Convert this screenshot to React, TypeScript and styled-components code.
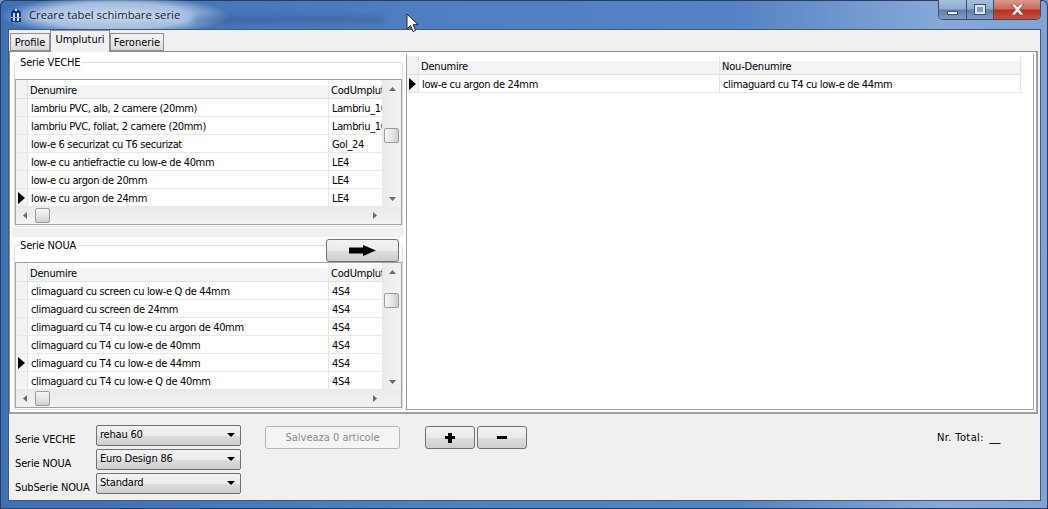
import React from "react";
import styled, { createGlobalStyle } from "styled-components";

const GlobalStyle = createGlobalStyle`
  html, body {
    margin: 0;
    padding: 0;
    background: #6f97cb;
  }
  * {
    box-sizing: border-box;
  }
`;

const uiFont = `"DejaVu Sans", "Noto Sans", sans-serif`;

const oldRows = [
  ["lambriu PVC, alb, 2 camere (20mm)", "Lambriu_10"],
  ["lambriu PVC, foliat, 2 camere (20mm)", "Lambriu_10"],
  ["low-e 6 securizat cu T6 securizat", "Gol_24"],
  ["low-e cu antiefractie cu low-e de 40mm", "LE4"],
  ["low-e cu argon de 20mm", "LE4"],
  ["low-e cu argon de 24mm", "LE4"],
];

const newRows = [
  ["climaguard cu screen cu low-e Q de 44mm", "4S4"],
  ["climaguard cu screen de 24mm", "4S4"],
  ["climaguard cu T4 cu low-e cu argon de 40mm", "4S4"],
  ["climaguard cu T4 cu low-e de 40mm", "4S4"],
  ["climaguard cu T4 cu low-e de 44mm", "4S4"],
  ["climaguard cu T4 cu low-e Q de 40mm", "4S4"],
];

const RowArrow = () => (
  <svg width="7" height="12" viewBox="0 0 7 12">
    <path d="M0 0 L7 6 L0 12 Z" fill="#000" />
  </svg>
);

const SmallArrow = ({ dir }: { dir: "up" | "down" | "left" | "right" }) => {
  const paths = {
    up: "M0 4 L3.5 0 L7 4 Z",
    down: "M0 0 L7 0 L3.5 4 Z",
    left: "M5 0 L5 7 L1 3.5 Z",
    right: "M1 0 L1 7 L5 3.5 Z",
  };
  const vertical = dir === "up" || dir === "down";
  return (
    <svg width={vertical ? 7 : 6} height={vertical ? 4 : 7} viewBox={vertical ? "0 0 7 4" : "0 0 6 7"}>
      <path d={paths[dir]} fill="#6a6a6a" />
    </svg>
  );
};

const DataGrid = ({
  rows,
  selected,
  thumbTop,
}: {
  rows: string[][];
  selected: number;
  thumbTop: number;
}) => (
  <GridFrame>
    <GridMain>
      <GridBody>
        <HeaderRow>
          <IndicatorHead />
          <HeadCell $width={301}>Denumire</HeadCell>
          <HeadCell $width={54}>CodUmplut</HeadCell>
        </HeaderRow>
        {rows.map((r, i) => (
          <DataRow key={r[0]}>
            <Indicator>{i === selected && <RowArrow />}</Indicator>
            <Cell $width={301}>{r[0]}</Cell>
            <Cell $width={54}>{r[1]}</Cell>
          </DataRow>
        ))}
      </GridBody>
      <VScroll>
        <ArrowBox>
          <SmallArrow dir="up" />
        </ArrowBox>
        <VThumb style={{ top: thumbTop }} />
        <ArrowBox>
          <SmallArrow dir="down" />
        </ArrowBox>
      </VScroll>
    </GridMain>
    <HScroll>
      <HArrowBox>
        <SmallArrow dir="left" />
      </HArrowBox>
      <HThumb />
      <HTrack />
      <HArrowBox>
        <SmallArrow dir="right" />
      </HArrowBox>
    </HScroll>
  </GridFrame>
);

const App = () => (
  <>
    <GlobalStyle />
    <Win>
      <TitleBar>
        <TitleGlow />
        <TitleSmear />
        <AppIcon>
          <svg width="10" height="14" viewBox="0 0 10 14">
            <path d="M0 14 V4 Q5 -2 10 4 V14 Z" fill="#10309c" />
            <rect x="4" y="1" width="2" height="2" fill="#dfe9ff" />
            <rect x="2" y="5" width="2" height="8" fill="#cfe0ff" />
            <rect x="6" y="5" width="2" height="8" fill="#eef4ff" />
            <rect x="0" y="9" width="10" height="1" fill="#8fb0f0" />
          </svg>
        </AppIcon>
        <TitleText>Creare tabel schimbare serie</TitleText>
        <WinButtons>
          <MinButton>
            <MinGlyph />
          </MinButton>
          <MaxButton>
            <MaxGlyph />
          </MaxButton>
          <CloseButton>
            <svg width="15" height="11" viewBox="0 0 15 11">
              <path
                d="M1 0 H5 L7.5 3 L10 0 H14 L9.5 5.5 L14 11 H10 L7.5 8 L5 11 H1 L5.5 5.5 Z"
                fill="#eeeeee"
                stroke="#5e2a22"
                strokeWidth="0.6"
              />
            </svg>
          </CloseButton>
        </WinButtons>
      </TitleBar>

      <Client>
        <TabStrip>
          <Tab $width={40}>Profile</Tab>
          <Tab $width={60} $active>
            Umpluturi
          </Tab>
          <Tab $width={54}>Feronerie</Tab>
        </TabStrip>
        <TabPage>
          <LeftColumn>
            <LeftPanel>
              <Group>
                <GroupLegend>Serie VECHE</GroupLegend>
                <DataGrid rows={oldRows} selected={5} thumbTop={48} />
              </Group>
            </LeftPanel>
            <Splitter />
            <LeftPanel>
              <Group>
                <GroupLegend>Serie NOUA</GroupLegend>
                <ArrowButton>
                  <svg width="27" height="11" viewBox="0 0 27 11">
                    <path d="M0 2.5 H14 V0 L27 5.5 L14 11 V8.5 H0 Z" fill="#000" />
                  </svg>
                </ArrowButton>
                <DataGrid rows={newRows} selected={4} thumbTop={30} />
              </Group>
            </LeftPanel>
          </LeftColumn>
          <RightPanel>
            <RightHeader>
              <IndicatorHead />
              <HeadCell $width={301}>Denumire</HeadCell>
              <HeadCell $width={301}>Nou-Denumire</HeadCell>
            </RightHeader>
            <RightRow>
              <Indicator>
                <RowArrow />
              </Indicator>
              <Cell $width={301}>low-e cu argon de 24mm</Cell>
              <Cell $width={301}>climaguard cu T4 cu low-e de 44mm</Cell>
            </RightRow>
          </RightPanel>
        </TabPage>

        <BottomBar>
          <FormColumn>
            <FormRow>
              <FormLabel>Serie VECHE</FormLabel>
              <Combo>
                rehau 60
                <ComboCaret />
              </Combo>
            </FormRow>
            <FormRow>
              <FormLabel>Serie NOUA</FormLabel>
              <Combo>
                Euro Design 86
                <ComboCaret />
              </Combo>
            </FormRow>
            <FormRow>
              <FormLabel>SubSerie NOUA</FormLabel>
              <Combo>
                Standard
                <ComboCaret />
              </Combo>
            </FormRow>
          </FormColumn>
          <SaveButton>Salveaza 0 articole</SaveButton>
          <PlusMinus>
            <SquareButton>
              <PlusGlyph />
            </SquareButton>
            <SquareButton>
              <MinusGlyph />
            </SquareButton>
          </PlusMinus>
          <TotalLabel>
            Nr. Total: <TotalValue>__</TotalValue>
          </TotalLabel>
        </BottomBar>
      </Client>

      <Cursor>
        <svg width="13" height="20" viewBox="0 0 13 20">
          <path
            d="M1 1 V16 L4.5 12.5 L7 18.5 L9.5 17.5 L7 11.7 H12 Z"
            fill="#fff"
            stroke="#222"
            strokeWidth="1"
          />
        </svg>
      </Cursor>
    </Win>
  </>
);

export default App;

const Win = styled.div`
  position: relative;
  width: 1048px;
  height: 509px;
  overflow: hidden;
  padding: 0 7px 8px 8px;
  display: flex;
  flex-direction: column;
  font-family: ${uiFont};
  font-stretch: condensed;
  font-size: 11px;
  color: #000;
  box-shadow: inset 0 0 0 1px #2c3e57;
  border-radius: 6px 6px 0 0;
  background: linear-gradient(
    90deg,
    #3f6fb4 0%,
    #4f7fc0 40%,
    #5582c4 70%,
    #86a9d9 90%,
    #7fa3d4 100%
  );
`;

const TitleBar = styled.div`
  position: relative;
  height: 29px;
  flex: none;
  display: flex;
  align-items: center;
  padding-left: 1px;
`;

const TitleGlow = styled.div`
  position: absolute;
  left: -8px;
  top: -4px;
  width: 230px;
  height: 40px;
  background: radial-gradient(
    closest-side,
    rgba(200, 216, 236, 0.95) 0%,
    rgba(180, 203, 232, 0.85) 65%,
    rgba(150, 185, 225, 0) 100%
  );
`;

const TitleSmear = styled.div`
  position: absolute;
  left: 185px;
  top: 16px;
  width: 190px;
  height: 7px;
  background: rgba(40, 70, 120, 0.35);
  filter: blur(3px);
`;

const AppIcon = styled.div`
  position: relative;
  width: 20px;
  height: 16px;
  padding-left: 2px;
  display: flex;
  align-items: center;
`;

const TitleText = styled.div`
  position: relative;
  font-family: "Open Sans", sans-serif;
  font-stretch: normal;
  font-size: 11.3px;
  color: #1a222e;
  text-shadow: 0 0 6px #fff;
`;

const WinButtons = styled.div`
  position: absolute;
  top: 0;
  right: 0;
  width: 103px;
  height: 20px;
  display: flex;
  border: 1px solid #3c4d66;
  border-top: none;
  border-radius: 0 0 5px 5px;
  overflow: hidden;
`;

const WinButton = styled.div`
  height: 100%;
  display: flex;
  align-items: center;
  justify-content: center;
  border-right: 1px solid #3c4d66;
  background: linear-gradient(180deg, #a9bfdc 0%, #8ea9cd 48%, #5d7ea8 52%, #7f9cc2 100%);
`;

const MinButton = styled(WinButton)`
  width: 28px;
  align-items: flex-end;
  padding-bottom: 4px;
`;

const MaxButton = styled(WinButton)`
  width: 27px;
`;

const CloseButton = styled(WinButton)`
  flex: 1;
  border-right: none;
  background: linear-gradient(180deg, #d99a90 0%, #c8685a 48%, #b5301e 52%, #c9503c 100%);
`;

const MinGlyph = styled.div`
  width: 11px;
  height: 4px;
  background: #eef2f8;
  border: 1px solid #3d4f69;
`;

const MaxGlyph = styled.div`
  width: 10px;
  height: 9px;
  border: 2px solid #dfe6f0;
  outline: 1px solid #3d4f69;
  background: #7f9cc2;
`;

const Client = styled.div`
  flex: 1;
  position: relative;
  min-height: 0;
  display: flex;
  flex-direction: column;
  background: #f0f0f0;
  border: 1px solid #46586f;
`;

const TabStrip = styled.div`
  height: 21px;
  flex: none;
  display: flex;
  align-items: flex-end;
  padding-left: 1px;
`;

const Tab = styled.div<{ $width: number; $active?: boolean }>`
  position: relative;
  width: ${(p) => p.$width}px;
  margin-bottom: ${(p) => (p.$active ? "-1px" : "0")};
  z-index: ${(p) => (p.$active ? 2 : 1)};
  height: ${(p) => (p.$active ? "22px" : "18px")};
  padding-top: 1px;
  line-height: 16px;
  text-align: center;
  border: 1px solid #8c8e94;
  border-bottom: ${(p) => (p.$active ? "none" : "1px solid #8c8e94")};
  background: ${(p) =>
    p.$active ? "#f0f0f0" : "linear-gradient(180deg, #f2f2f2 0%, #ebebeb 50%, #d8d8d8 100%)"};
`;

const TabPage = styled.div`
  width: 1029px;
  height: 363px;
  flex: none;
  display: flex;
  gap: 2px;
  padding: 2px;
  background: #fff;
  border: 1px solid #8c8e94;
  border-bottom: 2px solid #a0a0a0;
  border-right: 2px solid #a0a0a0;
`;

const LeftColumn = styled.div`
  width: 392px;
  flex: none;
  display: flex;
  flex-direction: column;
`;

const LeftPanel = styled.div`
  height: 174px;
  flex: none;
  background: #fff;
  padding: 8px 0 0 2px;
`;

const Splitter = styled.div`
  height: 9px;
  flex: none;
  background: #f0f0f0;
`;

const Group = styled.div`
  position: relative;
  width: 389px;
  height: 165px;
  padding-top: 16px;
  border: 1px solid #d5dfe5;
  border-radius: 3px;
`;

const GroupLegend = styled.div`
  position: absolute;
  left: 4px;
  top: -8px;
  padding: 0 1px;
  line-height: 15px;
  letter-spacing: -0.15px;
  background: #fff;
`;

const GridFrame = styled.div`
  width: 387px;
  height: 146px;
  display: flex;
  flex-direction: column;
  border: 1px solid #a0a0a0;
  background: #fff;
`;

const GridMain = styled.div`
  height: 127px;
  flex: none;
  display: flex;
`;

const GridBody = styled.div`
  width: 367px;
  flex: none;
  overflow: hidden;
`;

const HeaderRow = styled.div`
  height: 19px;
  display: flex;
  background: linear-gradient(180deg, #fff 0%, #fff 25%, #f4f5f7 30%, #f2f3f5 100%);
  border-bottom: 1px solid #e0e0e0;
`;

const DataRow = styled.div`
  height: 18px;
  display: flex;
  border-bottom: 1px solid #e8e8e8;
`;

const IndicatorHead = styled.div`
  width: 12px;
  flex: none;
  border-right: 1px solid #e2e2e2;
  background: #f3f3f3;
`;

const Indicator = styled.div`
  width: 12px;
  flex: none;
  display: flex;
  align-items: center;
  justify-content: center;
  border-right: 1px solid #e2e2e2;
  background: #f3f3f3;
`;

const HeadCell = styled.div<{ $width: number }>`
  width: ${(p) => p.$width}px;
  flex: none;
  padding: 3px 0 0 2px;
  line-height: 15px;
  letter-spacing: -0.2px;
  overflow: hidden;
  white-space: nowrap;
  border-right: 1px solid #e6e6e6;
`;

const Cell = styled.div<{ $width: number }>`
  width: ${(p) => p.$width}px;
  flex: none;
  padding: 2px 0 0 3px;
  line-height: 15px;
  letter-spacing: -0.35px;
  overflow: hidden;
  white-space: nowrap;
  border-right: 1px solid #e6e6e6;
`;

const VScroll = styled.div`
  position: relative;
  flex: 1;
  display: flex;
  flex-direction: column;
  justify-content: space-between;
  background: linear-gradient(90deg, #eaeaea 0%, #f3f3f3 100%);
`;

const ArrowBox = styled.div`
  height: 17px;
  display: flex;
  align-items: center;
  justify-content: center;
`;

const VThumb = styled.div`
  position: absolute;
  left: 1px;
  width: 15px;
  height: 15px;
  border: 1px solid #9a9a9a;
  border-radius: 2px;
  background: linear-gradient(90deg, #f6f6f6 0%, #e6e6e6 50%, #cfcfcf 100%);
`;

const HScroll = styled.div`
  height: 17px;
  flex: none;
  display: flex;
  align-items: center;
  background: linear-gradient(180deg, #eaeaea 0%, #f3f3f3 100%);
`;

const HArrowBox = styled.div`
  width: 17px;
  height: 100%;
  flex: none;
  display: flex;
  align-items: center;
  justify-content: center;
`;

const HThumb = styled.div`
  width: 15px;
  height: 15px;
  flex: none;
  margin-left: 2px;
  border: 1px solid #9a9a9a;
  border-radius: 2px;
  background: linear-gradient(180deg, #f6f6f6 0%, #e6e6e6 50%, #cfcfcf 100%);
`;

const HTrack = styled.div`
  width: 316px;
  flex: none;
`;

const ArrowButton = styled.div`
  position: absolute;
  right: 3px;
  top: -7px;
  width: 73px;
  height: 23px;
  display: flex;
  align-items: center;
  justify-content: center;
  z-index: 2;
  border: 1px solid #707070;
  border-radius: 3px;
  background: linear-gradient(180deg, #f2f2f2 0%, #ebebeb 50%, #dddddd 51%, #cfcfcf 100%);
`;

const RightPanel = styled.div`
  flex: 1;
  min-width: 0;
  border: 1px solid #a0a0a0;
  border-top: none;
  background: #fff;
  padding-top: 2px;
`;

const RightHeader = styled(HeaderRow)`
  width: 615px;
`;

const RightRow = styled(DataRow)`
  width: 615px;
`;

const BottomBar = styled.div`
  position: relative;
  flex: 1;
  min-height: 0;
  display: flex;
  align-items: flex-start;
  padding: 11px 0 0 6px;
`;

const FormColumn = styled.div`
  width: 226px;
  flex: none;
  display: flex;
  flex-direction: column;
  gap: 3px;
`;

const FormRow = styled.div`
  height: 21px;
  display: flex;
  align-items: flex-end;
`;

const FormLabel = styled.div`
  width: 81px;
  flex: none;
  line-height: 15px;
  letter-spacing: -0.15px;
  margin-bottom: -1px;
  white-space: nowrap;
`;

const Combo = styled.div`
  position: relative;
  width: 145px;
  height: 21px;
  padding-left: 3px;
  line-height: 17px;
  letter-spacing: -0.2px;
  border: 1px solid #707070;
  border-radius: 2px;
  background: linear-gradient(180deg, #f2f2f2 0%, #ebebeb 50%, #dddddd 51%, #cfcfcf 100%);
`;

const ComboCaret = styled.div`
  position: absolute;
  right: 5px;
  top: 7px;
  width: 0;
  height: 0;
  border-left: 4px solid transparent;
  border-right: 4px solid transparent;
  border-top: 4px solid #000;
`;

const SaveButton = styled.div`
  width: 135px;
  height: 23px;
  flex: none;
  margin: 1px 0 0 24px;
  text-align: center;
  line-height: 21px;
  color: #8a8a8a;
  border: 1px solid #b5b5b5;
  border-radius: 3px;
  background: #f4f4f4;
`;

const PlusMinus = styled.div`
  display: flex;
  gap: 2px;
  margin: 1px 0 0 25px;
`;

const SquareButton = styled.div`
  width: 50px;
  height: 23px;
  display: flex;
  align-items: center;
  justify-content: center;
  border: 1px solid #707070;
  border-radius: 3px;
  background: linear-gradient(180deg, #f2f2f2 0%, #ebebeb 50%, #dddddd 51%, #cfcfcf 100%);
`;

const PlusGlyph = styled.div`
  width: 10px;
  height: 10px;
  background:
    linear-gradient(#000, #000) center / 10px 3px no-repeat,
    linear-gradient(#000, #000) center / 4px 10px no-repeat;
`;

const MinusGlyph = styled.div`
  width: 10px;
  height: 3px;
  background: #000;
`;

const TotalLabel = styled.div`
  margin: 5px 0 0 410px;
  line-height: 15px;
  letter-spacing: 0.4px;
  white-space: pre;
`;

const TotalValue = styled.span`
  margin-left: 2px;
  letter-spacing: 0;
  font-size: 12px;
`;

const Cursor = styled.div`
  position: absolute;
  left: 406px;
  top: 13px;
  z-index: 5;
`;
